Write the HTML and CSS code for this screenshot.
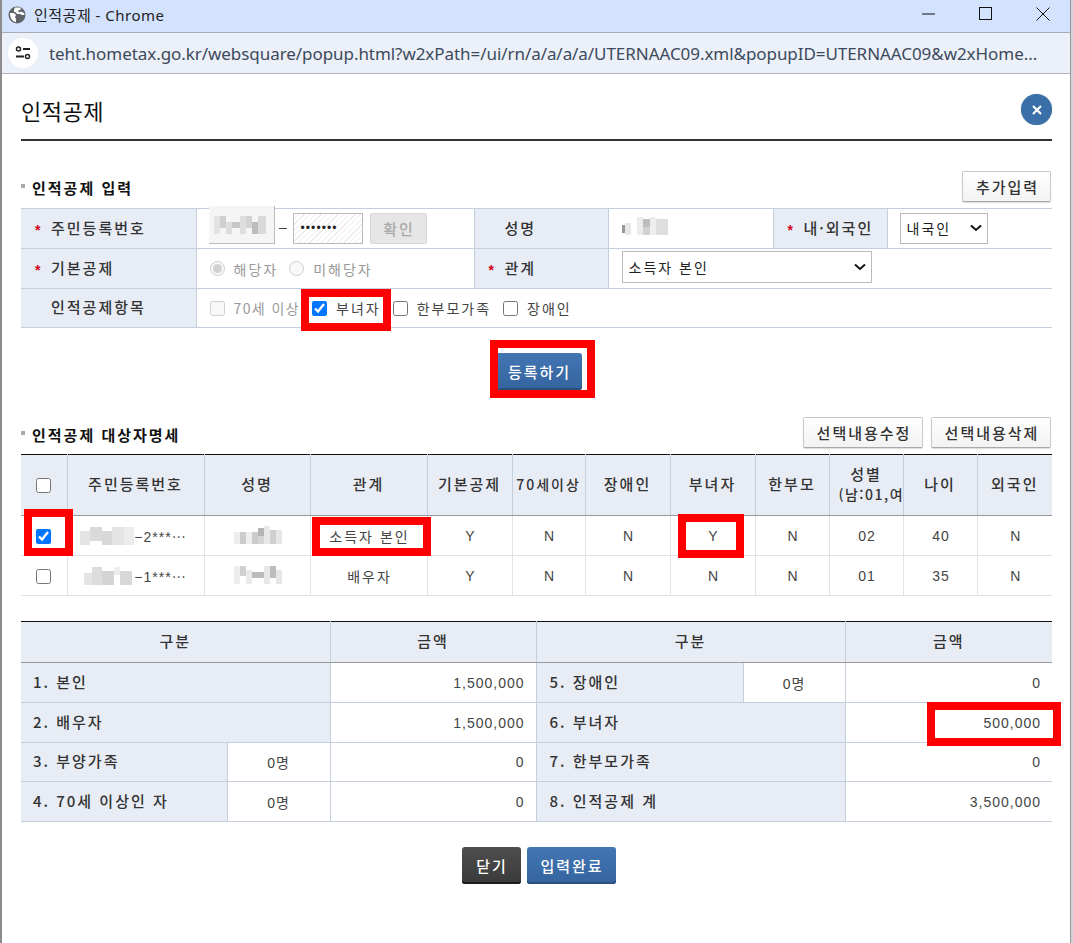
FILE: index.html
```html
<!DOCTYPE html>
<html lang="ko">
<head>
<meta charset="utf-8">
<title>인적공제</title>
<link rel="stylesheet" href="styles.css">
</head>
<body>
<div class="window">
  <header class="titlebar">
    <svg class="globe" width="18" height="18" viewBox="0 0 18 18"><circle cx="9" cy="9" r="8.5" fill="#5f6368"/><path d="M2 7l4 0 2 2-1 2 1 2 0 3.2C4.500 15.600 1.800 12 2 7zM7 1.500l5 0 1 2-3 1 1 2 2-1 3 1.500 .6 2-2.600 0-2-1-3 0-1.500-2-1.500 0 0-2z" fill="#fff"/></svg>
    <span class="wintitle">인적공제 - Chrome</span>
    <div class="winctl">
      <svg width="14" height="14" viewBox="0 0 14 14"><path d="M0 7h13" stroke="#111" fill="none"/></svg>
      <svg width="14" height="14" viewBox="0 0 14 14"><rect x=".5" y=".5" width="12" height="12" fill="none" stroke="#111"/></svg>
      <svg width="14" height="14" viewBox="0 0 14 14"><path d="M.5 .5l13 13M13.500 .5l-13 13" stroke="#111" fill="none"/></svg>
    </div>
  </header>
  <div class="urlbar">
    <span class="tune"><svg width="16" height="14" viewBox="0 0 16 14"><circle cx="3.500" cy="3" r="2" fill="none" stroke="#222" stroke-width="1.500"/><path d="M8 3h7M1 10.500h8" stroke="#222" stroke-width="1.800"/><circle cx="12.500" cy="10.500" r="2" fill="none" stroke="#222" stroke-width="1.500"/></svg></span>
    <span class="url">teht.hometax.go.kr/websquare/popup.html?w2xPath=/ui/rn/a/a/a/a/UTERNAAC09.xml&amp;popupID=UTERNAAC09&amp;w2xHome...</span>
  </div>
  <main class="popup">
    <div class="popup-head">
      <h1 class="popup-title">인적공제</h1>
      <span class="popup-close"><svg width="10" height="10" viewBox="0 0 10 10"><path d="M1 1l8 8M9 1l-8 8" stroke="#fff" stroke-width="2.200"/></svg></span>
    </div>

    <div class="sec-head first">
      <h2 class="sec-title">인적공제 입력</h2>
      <div class="sec-btns"><button class="btn-light add">추가입력</button></div>
    </div>
    <table class="grid form">
      <colgroup><col class="f1"><col class="f2"><col class="f3"><col class="f4"><col class="f5"><col class="f6"></colgroup>
      <tr class="r40">
        <th><span class="star">*</span>주민등록번호</th>
        <td class="rrn-td">
          <div class="rrn">
            <span class="rrn-front"><svg width="66" height="38" viewBox="0 0 66 38"><rect x="5" y="10" width="6" height="18" fill="#e2e2e2"/><rect x="11" y="10" width="6" height="12" fill="#cfcfcf"/><rect x="17" y="16" width="6" height="12" fill="#dcdcdc"/><rect x="23" y="16" width="8" height="6" fill="#c6c6c6"/><rect x="31" y="10" width="6" height="18" fill="#dedede"/><rect x="37" y="10" width="6" height="12" fill="#d2d2d2"/><rect x="43" y="16" width="6" height="12" fill="#bdbdbd"/><rect x="49" y="10" width="8" height="18" fill="#dadada"/></svg></span>
            <span class="dash">–</span>
            <span class="rrn-back">•••••••</span>
            <button class="btn-check" disabled>확인</button>
          </div>
        </td>
        <th><span class="star"></span>성명</th>
        <td class="name-cell"><svg class="mosaic" width="46" height="20" viewBox="0 0 46 20"><rect x="0" y="8" width="3" height="8" fill="#999"/><rect x="3" y="6" width="6" height="12" fill="#e8e8e8"/><rect x="15" y="0" width="6" height="18" fill="#ececec"/><rect x="21" y="2" width="7" height="8" fill="#bdbdbd"/><rect x="21" y="10" width="7" height="8" fill="#d2d2d2"/><rect x="28" y="0" width="6" height="18" fill="#eee"/><rect x="34" y="2" width="12" height="16" fill="#dedede"/></svg></td>
        <th><span class="star">*</span>내·외국인</th>
        <td class="sel-cell"><select class="sel nat"><option>내국인</option></select></td>
      </tr>
      <tr class="r40">
        <th><span class="star">*</span>기본공제</th>
        <td>
          <div class="opts dim">
            <label class="opt"><input type="radio" name="base" checked disabled>해당자</label>
            <label class="opt"><input type="radio" name="base" disabled>미해당자</label>
          </div>
        </td>
        <th><span class="star">*</span>관계</th>
        <td colspan="3" class="sel-cell"><select class="sel rel"><option>소득자 본인</option></select></td>
      </tr>
      <tr class="r39">
        <th><span class="star"></span>인적공제항목</th>
        <td colspan="5">
          <div class="opts">
            <label class="opt dim"><input type="checkbox" disabled>70세 이상</label>
            <label class="opt"><input type="checkbox" checked>부녀자</label>
            <label class="opt"><input type="checkbox">한부모가족</label>
            <label class="opt"><input type="checkbox">장애인</label>
          </div>
        </td>
      </tr>
    </table>

    <div class="act first-act"><button class="btn-blue reg">등록하기</button></div>

    <div class="sec-head second">
      <h2 class="sec-title">인적공제 대상자명세</h2>
      <div class="sec-btns">
        <button class="btn-light sel-btn">선택내용수정</button>
        <button class="btn-light sel-btn">선택내용삭제</button>
      </div>
    </div>
    <table class="grid list">
      <colgroup><col class="l1"><col class="l2"><col class="l3"><col class="l4"><col class="l5"><col class="l6"><col class="l7"><col class="l8"><col class="l9"><col class="l10"><col class="l11"><col class="l12"></colgroup>
      <tr class="lh">
        <th><input type="checkbox"></th><th>주민등록번호</th><th>성명</th><th>관계</th><th>기본공제</th><th class="tight">70세이상</th><th>장애인</th><th>부녀자</th><th>한부모</th>
        <th class="gender"><div class="clip"><div class="g1">성별</div><div class="g2">(남:01,여:02)</div></div></th><th>나이</th><th>외국인</th>
      </tr>
      <tr class="r40">
        <td><input type="checkbox" checked></td>
        <td><div class="rrn-cell"><svg class="mosaic" width="54" height="18" viewBox="0 0 54 18"><rect x="0" y="4" width="10" height="14" fill="#e4e4e4"/><rect x="10" y="0" width="12" height="14" fill="#dadada"/><rect x="22" y="4" width="10" height="14" fill="#d8d8d8"/><rect x="32" y="0" width="12" height="18" fill="#e4e4e4"/><rect x="44" y="0" width="10" height="18" fill="#ececec"/></svg><span>−2***⋯</span></div></td>
        <td><svg class="mosaic" width="48" height="20" viewBox="0 0 48 20"><rect x="0" y="6" width="6" height="12" fill="#eee"/><rect x="6" y="6" width="6" height="12" fill="#ccc"/><rect x="12" y="6" width="6" height="12" fill="#eee"/><rect x="18" y="6" width="6" height="12" fill="#ccc"/><rect x="24" y="2" width="6" height="8" fill="#b5b5b5"/><rect x="24" y="10" width="6" height="8" fill="#d5d5d5"/><rect x="30" y="0" width="6" height="18" fill="#e8e8e8"/><rect x="36" y="4" width="6" height="14" fill="#d0d0d0"/><rect x="42" y="4" width="6" height="14" fill="#e6e6e6"/></svg></td>
        <td class="ko">소득자 본인</td><td>Y</td><td>N</td><td>N</td><td>Y</td><td>N</td><td>02</td><td>40</td><td>N</td>
      </tr>
      <tr class="r40">
        <td><input type="checkbox"></td>
        <td><div class="rrn-cell"><svg class="mosaic" width="54" height="18" viewBox="0 0 54 18"><rect x="4" y="6" width="8" height="12" fill="#e4e4e4"/><rect x="12" y="0" width="10" height="18" fill="#dcdcdc"/><rect x="22" y="4" width="12" height="14" fill="#d4d4d4"/><rect x="34" y="0" width="6" height="8" fill="#eee"/><rect x="40" y="4" width="12" height="14" fill="#d8d8d8"/></svg><span>−1***⋯</span></div></td>
        <td><svg class="mosaic" width="48" height="20" viewBox="0 0 48 20"><rect x="0" y="0" width="6" height="18" fill="#eee"/><rect x="6" y="0" width="6" height="10" fill="#d0d0d0"/><rect x="12" y="4" width="6" height="14" fill="#eaeaea"/><rect x="18" y="6" width="12" height="6" fill="#bbb"/><rect x="30" y="0" width="6" height="18" fill="#e8e8e8"/><rect x="36" y="0" width="6" height="12" fill="#bdbdbd"/><rect x="42" y="4" width="6" height="14" fill="#e6e6e6"/></svg></td>
        <td class="ko">배우자</td><td>Y</td><td>N</td><td>N</td><td>N</td><td>N</td><td>01</td><td>35</td><td>N</td>
      </tr>
    </table>

    <table class="grid summary">
      <colgroup><col class="s1"><col class="s2"><col class="s3"><col class="s4"><col class="s5"><col class="s6"></colgroup>
      <tr class="lh2"><th colspan="2">구분</th><th>금액</th><th colspan="2">구분</th><th>금액</th></tr>
      <tr class="r40"><th class="lbl" colspan="2">1. 본인</th><td class="num">1,500,000</td><th class="lbl rl">5. 장애인</th><td class="cnt">0명</td><td class="num">0</td></tr>
      <tr class="r40"><th class="lbl" colspan="2">2. 배우자</th><td class="num">1,500,000</td><th class="lbl rl" colspan="2">6. 부녀자</th><td class="num">500,000</td></tr>
      <tr class="r39"><th class="lbl">3. 부양가족</th><td class="cnt">0명</td><td class="num">0</td><th class="lbl rl" colspan="2">7. 한부모가족</th><td class="num">0</td></tr>
      <tr class="r40"><th class="lbl">4. 70세 이상인 자</th><td class="cnt">0명</td><td class="num">0</td><th class="lbl rl" colspan="2">8. 인적공제 계</th><td class="num">3,500,000</td></tr>
    </table>

    <div class="act last-act">
      <button class="btn-dark">닫기</button>
      <button class="btn-blue done">입력완료</button>
    </div>
  </main>

  <span class="mark m1"></span>
  <span class="mark m2"></span>
  <span class="mark m3"></span>
  <span class="mark m4"></span>
  <span class="mark m5"></span>
  <span class="mark m6"></span>
</div>
</body>
</html>
```
FILE: styles.css
```css
* { box-sizing: border-box; }
html, body { margin: 0; padding: 0; }
body {
  width: 1073px; height: 943px; overflow: hidden; background: #cfd3d8;
  font-family: "Liberation Sans", "Noto Sans CJK KR", sans-serif;
  font-size: 14px; color: #333;
}
.window {
  position: relative; width: 1071px; height: 943px; background: #fff;
  border-left: 2px solid #8c8c8c; border-right: 1px solid #9a9a9a;
}
.titlebar {
  height: 33px; display: flex; align-items: center; background: #d3e3fd;
  border-bottom: 1px solid #a9adb3; padding-left: 6px;
  font-family: "Noto Sans", "Noto Sans CJK KR", sans-serif;
}
.globe { margin-right: 8px; margin-top: -2px; }
.wintitle { font-size: 15px; letter-spacing: .5px; color: #222; margin-top: -4px; }
.winctl { margin-left: auto; display: flex; gap: 43px; padding-right: 20px; margin-top: -4px; }
.winctl svg { display: block; }
.urlbar {
  height: 41px; display: flex; align-items: center; background: #ecf0f8;
  border-bottom: 1px solid #b3b6bb; padding-left: 6px;
}
.tune {
  width: 30px; height: 30px; border-radius: 50%; background: #fff;
  display: flex; align-items: center; justify-content: center; margin-right: 11px;
}
.url {
  font-family: "Noto Sans", sans-serif; font-size: 17px; color: #3c4a5c; white-space: nowrap;
  letter-spacing: -0.06px;
}
.popup { padding: 0 18px 0 19px; }
.popup-head {
  height: 67px; display: flex; align-items: center; justify-content: space-between;
  border-bottom: 2px solid #333; padding-top: 6px; padding-right: 0;
}
.popup-title { margin: 0; font-size: 22px; letter-spacing: .5px; font-weight: 400; color: #111; font-family: "Noto Sans CJK KR", sans-serif; }
.popup-close {
  width: 31px; height: 31px; border-radius: 50%; background: #3b6fa8;
  display: flex; align-items: center; justify-content: center;
  box-shadow: 0 0 1px #8aa;
}
.sec-head { display: flex; justify-content: space-between; align-items: center; }
.sec-head.first { margin-top: 30px; height: 30px; margin-bottom: 7px; }
.sec-head.second { margin-top: 27px; height: 31px; margin-bottom: 6px; }
.sec-title {
  margin: 0; font-size: 15px; font-weight: 700; color: #111; letter-spacing: 2px;
  display: flex; align-items: center; padding-top: 3px; font-family: "Noto Sans CJK KR", sans-serif;
}
.sec-title::before {
  content: ""; width: 4px; height: 4px; background: #aaa; margin-right: 7px; margin-top: -3px;
}
.sec-btns { display: flex; gap: 8px; padding-right: 1px; }
button { font-family: "Noto Sans CJK KR", "Liberation Sans", sans-serif; padding: 0 0 0 2px; cursor: default; }
.btn-light {
  height: 31px; font-size: 15px; font-weight: 500; color: #333; letter-spacing: 2px;
  border: 1px solid #c9c9c9; border-bottom-color: #aaa; border-radius: 2px;
  background: linear-gradient(#fff, #f3f3f3);
  box-shadow: 0 1px 1px #ddd;
}
.btn-light.add { width: 89px; }
.btn-light.sel-btn { width: 120px; }
.grid { border-collapse: collapse; table-layout: fixed; width: 1031px; }
.grid th, .grid td { padding: 0; font-size: 14px; letter-spacing: 1px; }
.grid th { background: #e7ecf5; color: #333; font-weight: 500; font-size: 15px; letter-spacing: 2px; font-family: "Noto Sans CJK KR", sans-serif; padding-bottom: 3px; }
.grid td { background: #fff; color: #444; }
.r40 { height: 40px; }
.r39 { height: 39px; }

.form { border-top: 1px solid #c3cfdc; }
.form th, .form td { border-bottom: 1px solid #c3cfdc; border-right: 1px solid #c3cfdc; }
.form td:last-child { border-right: 0; }
.form th { text-align: left; padding-left: 14px; }
.form td { padding-left: 13px; }
.f1 { width: 175px; } .f2 { width: 278px; } .f3 { width: 134px; } .f4 { width: 165px; } .f5 { width: 114px; } .f6 { width: 165px; }
.star {
  display: inline-block; width: 16px; color: #d0021b; font-family: "Liberation Sans", sans-serif;
  font-weight: 700; font-size: 14px; letter-spacing: 0; vertical-align: -1px;
}
.form .rrn-td { vertical-align: top; }
.rrn { display: flex; align-items: flex-end; height: 38px; margin-left: -1px; margin-top: -3px; }
.rrn-front {
  width: 66px; height: 38px; background: #f5f5f5; border-right: 1px solid #bbb; border-bottom: 1px solid #bbb; overflow: hidden;
}
.rrn-front svg { display: block; }
.dash { width: 18px; height: 31px; text-align: center; line-height: 28px; color: #444; }
.rrn-back {
  width: 70px; height: 31px; border: 1px solid #bbb; line-height: 29px; padding-left: 7px; color: #222; font-size: 12px; letter-spacing: 1.1px;
  background: repeating-linear-gradient(135deg, #fff 0 3px, #ececec 3px 4px);
}
.btn-check {
  width: 57px; height: 31px; margin-left: 7px; border: 1px solid #d8d8d8; border-radius: 2px;
  background: #e6e6e6; color: #aaa; font-size: 15px; font-weight: 500; letter-spacing: 2px;
}
.name-cell .mosaic { margin-bottom: 4px; }
.mosaic { display: inline-block; vertical-align: middle; }
.sel {
  appearance: none; -webkit-appearance: none;
  display: block; height: 31px; border: 1px solid #bbb; color: #222; border-radius: 0;
  font-family: "Noto Sans CJK KR", sans-serif; font-size: 14px; letter-spacing: 2px; padding-left: 6px;
  background: #fff url("data:image/svg+xml,%3Csvg xmlns='http://www.w3.org/2000/svg' width='12' height='8' viewBox='0 0 12 8'%3E%3Cpath d='M1 1.500l5 4.500 5-4.500' fill='none' stroke='%23111' stroke-width='2'/%3E%3C/svg%3E") no-repeat right 5px center;
}
.sel.nat { width: 88px; margin-left: -1px; margin-bottom: 1px; }
.sel.rel { width: 250px; height: 32px; margin-bottom: 3px; }
.opts { display: flex; align-items: center; gap: 12px; font-family: "Noto Sans CJK KR", sans-serif; letter-spacing: 2px; }
.opts.dim { color: #999; gap: 11px; }
.opt { display: flex; align-items: center; gap: 9px; color: inherit; }
.opt.dim { color: #999; letter-spacing: 1.4px; }
.opt input { margin: 0; width: 15px; height: 15px; }

.act { display: flex; justify-content: center; gap: 6px; }
.first-act { margin-top: 25px; padding-left: 4px; }
.last-act { margin-top: 25px; padding-left: 4px; }
.btn-blue, .btn-dark {
  color: #fff; font-weight: 500; font-size: 15px; letter-spacing: 2px; border: 0; border-radius: 3px;
}
.btn-blue { background: linear-gradient(#4276b4, #35649e); box-shadow: inset 0 -2px 0 #2a4f7e; }
.btn-dark { background: linear-gradient(#4e4e4e, #3a3a3a); box-shadow: inset 0 -2px 0 #1c1c1c; width: 59px; height: 37px; }
.btn-blue.reg { width: 86px; height: 37px; }
.btn-blue.done { width: 89px; height: 37px; }

.list { border-top: 1px solid #111; }
.list th, .list td { text-align: center; border-right: 1px solid #dfe2e6; border-bottom: 1px solid #dfe2e6; }
.list th { border-right-color: #c3cfdc; border-bottom-color: #999; }
.list th:last-child, .list td:last-child { border-right: 0; }
.list td { padding-left: 2px; }
.list td:first-child { padding-left: 0; }
.list .ko { letter-spacing: 2px; font-family: "Noto Sans CJK KR", sans-serif; }
.list input { margin: 0; width: 15px; height: 15px; vertical-align: middle; }
.lh { height: 61px; }
.grid .tight { letter-spacing: 2px; font-size: 14px; white-space: nowrap; overflow: hidden; }
.gender { overflow: hidden; }
.gender .clip { overflow: hidden; white-space: nowrap; width: 73px; line-height: 20px; }
.g1 { text-align: center; }
.g2 { text-align: left; padding-left: 9px; font-size: 14px; letter-spacing: 1.5px; }
.rrn-cell { display: flex; justify-content: center; align-items: center; padding-right: 6px; }
.l1 { width: 46px; } .l2 { width: 137px; } .l3 { width: 106px; } .l4 { width: 117px; } .l5 { width: 85px; } .l6 { width: 73px; }
.l7 { width: 85px; } .l8 { width: 85px; } .l9 { width: 74px; } .l10 { width: 74px; } .l11 { width: 74px; } .l12 { width: 75px; }

.summary { margin-top: 25px; border-top: 1px solid #111; }
.summary th, .summary td { border-right: 1px solid #c3cfdc; border-bottom: 1px solid #c3cfdc; }
.summary tr > :last-child { border-right: 0; }
.lh2 { height: 41px; }
.lh2 th { border-bottom-color: #999 !important; text-align: center; }
.summary .lbl { text-align: left; padding-left: 12px; }
.summary .lbl.rl { padding-left: 13px; }
.summary .num { text-align: right; padding-right: 11px; }
.summary .cnt { text-align: center; }
.s1 { width: 206px; } .s2 { width: 103px; } .s3 { width: 206px; } .s4 { width: 207px; } .s5 { width: 102px; } .s6 { width: 207px; }

.mark { position: absolute; border: 8px solid #f00; background: transparent; }
.m1 { left: 299px; top: 289px; width: 90px; height: 42px; }
.m2 { left: 488px; top: 340px; width: 105px; height: 58px; }
.m3 { left: 22px; top: 509px; width: 49px; height: 47px; }
.m4 { left: 310px; top: 517px; width: 119px; height: 39px; }
.m5 { left: 676px; top: 514px; width: 66px; height: 44px; }
.m6 { left: 925px; top: 702px; width: 134px; height: 44px; }
```
